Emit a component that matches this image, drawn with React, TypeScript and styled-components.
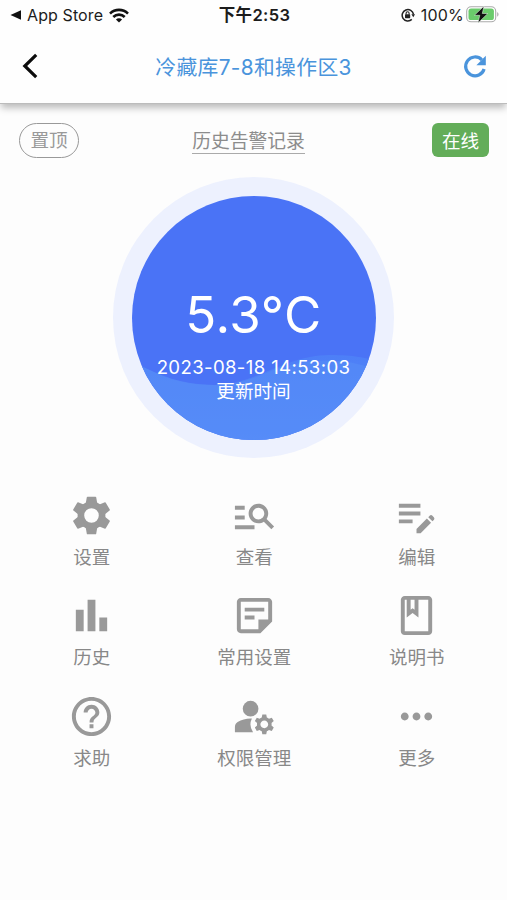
import React from "react";
import styled, { createGlobalStyle } from "styled-components";
import {
  MdManageSearch,
  MdEditNote,
  MdBarChart,
  MdOutlineStickyNote2,
  MdOutlineBook,
  MdHelpOutline,
  MdManageAccounts,
  MdMoreHoriz,
} from "react-icons/md";

const GlobalStyle = createGlobalStyle`
  * { box-sizing: border-box; }
  body {
    margin: 0;
    background: #fdfdfd;
    font-family: Inter, "Noto Sans CJK SC", sans-serif;
  }
  svg { display: block; flex: none; }
`;

const Screen = styled.div`
  width: 507px;
  height: 900px;
  display: flex;
  flex-direction: column;
  overflow: hidden;
  background: #fdfdfd;
`;

const TopArea = styled.header`
  flex: none;
  height: 104px;
  background: #fefefe;
  border-bottom: 1px solid #bcbcbc;
  box-shadow: 0 5px 7px -1px rgba(0, 0, 0, 0.26);
`;

const StatusBar = styled.div`
  height: 30px;
  display: grid;
  grid-template-columns: 1fr auto 1fr;
  align-items: center;
  padding: 0 8px 0 10px;
  color: #1c1c1c;
  font-size: 16px;
  line-height: 30px;
`;

const StatusSide = styled.div<{ $end?: boolean }>`
  display: flex;
  align-items: center;
  justify-content: ${(p) => (p.$end ? "flex-end" : "flex-start")};
  gap: 6px;
`;

const StoreName = styled.span`
  letter-spacing: 0.1px;
`;

const Percent = styled.span`
  margin-right: -4px;
  letter-spacing: 0.2px;
`;

const Clock = styled.span`
  font-size: 16.5px;
  font-weight: 600;
  letter-spacing: 0.35px;
`;

const NavBar = styled.div`
  height: 73px;
  display: grid;
  grid-template-columns: 60px 1fr 60px;
  align-items: center;
  padding: 0 20px 0 18px;
`;

const NavButton = styled.button<{ $end?: boolean }>`
  display: flex;
  justify-content: ${(p) => (p.$end ? "flex-end" : "flex-start")};
  padding: 0;
  border: 0;
  background: none;
  color: #4a94dc;
`;

const Title = styled.h1`
  margin: 2px 0 0 2px;
  color: #4a94dc;
  font-size: 20.8px;
  font-weight: 400;
  line-height: 30px;
  letter-spacing: 0.35px;
  text-align: center;
  white-space: nowrap;
`;

const InfoRow = styled.div`
  flex: none;
  height: 36px;
  margin-top: 18px;
  padding: 0 18px 0 19px;
  display: grid;
  grid-template-columns: 60px auto 57px;
  align-items: center;
  justify-content: space-between;
  font-size: 18.6px;
`;

const PinButton = styled.button`
  width: 60px;
  height: 35px;
  padding: 1px 0 0;
  border: 1.5px solid #999;
  border-radius: 18px;
  background: none;
  color: #999;
  font: inherit;
  line-height: 31px;
`;

const RecordLink = styled.a`
  margin: 1px 14px 0 0;
  height: 27px;
  border-bottom: 1.5px solid #aaa;
  color: #8c8c8c;
  font-size: 18.8px;
  line-height: 29px;
`;

const OnlineTag = styled.span`
  width: 57px;
  height: 34px;
  border-radius: 6px;
  background: #63ad59;
  color: #fff;
  line-height: 36px;
  text-align: center;
`;

const Gauge = styled.section`
  flex: none;
  align-self: center;
  width: 281px;
  height: 281px;
  margin-top: 19px;
  display: grid;
  place-items: center;
  border-radius: 50%;
  background: #edf1fe;
`;

const Dial = styled.div`
  position: relative;
  width: 244px;
  height: 244px;
  border-radius: 50%;
  overflow: hidden;
  background: #4a73f6;
`;

const Wave = styled.svg`
  position: absolute;
  inset: 0;
`;

const Reading = styled.div`
  position: relative;
  display: flex;
  flex-direction: column;
  align-items: center;
  padding-top: 88px;
  color: #fff;
`;

const Temperature = styled.div`
  font-size: 51px;
  line-height: 62px;
  letter-spacing: 0.6px;
`;

const Caption = styled.div`
  font-size: 18.6px;
  line-height: 24px;
  white-space: nowrap;
`;

const Timestamp = styled(Caption)`
  margin-top: 9px;
  letter-spacing: 0.36px;
`;

const Menu = styled.nav`
  flex: none;
  margin-top: 34px;
  padding-left: 10.5px;
  display: grid;
  grid-template-columns: repeat(3, 162.5px);
  grid-auto-rows: 100.4px;
`;

const MenuItem = styled.button`
  display: flex;
  flex-direction: column;
  align-items: center;
  padding: 0;
  border: 0;
  background: none;
  color: #999;
  font: inherit;
`;

const MenuLabel = styled.span`
  margin-top: 4px;
  color: #888;
  font-size: 18.5px;
  line-height: 28px;
`;

const Gear = ({ size }: { size: number }) => (
  <svg width={size} height={size} viewBox="-23.5 -23.5 47 47" fill="currentColor">
    <circle r="10.6" fill="none" stroke="currentColor" strokeWidth="6.6" />
    {[0, 60, 120, 180, 240, 300].map((angle) => (
      <path
        key={angle}
        d="M-4 -18.8H4Q4.6 -18.8 4.7 -18.2L5.6 -13 7 -10H-7L-5.6 -13 -4.7 -18.2Q-4.6 -18.8 -4 -18.8z"
        transform={`rotate(${angle})`}
      />
    ))}
  </svg>
);

const items = [
  { label: "设置", Icon: Gear },
  { label: "查看", Icon: MdManageSearch },
  { label: "编辑", Icon: MdEditNote },
  { label: "历史", Icon: MdBarChart },
  { label: "常用设置", Icon: MdOutlineStickyNote2 },
  { label: "说明书", Icon: MdOutlineBook },
  { label: "求助", Icon: MdHelpOutline },
  { label: "权限管理", Icon: MdManageAccounts },
  { label: "更多", Icon: MdMoreHoriz },
];

const BackToApp = () => (
  <svg width="11" height="10" viewBox="0 0 11 10">
    <path d="M.5 5 11 .2v9.6z" fill="#111" />
  </svg>
);

const Wifi = () => (
  <svg width="20" height="15" viewBox="0 0 20 15" fill="none" stroke="#111" strokeWidth="2.6">
    <path d="M1 5.6a12.8 12.8 0 0 1 18 0" />
    <path d="M4.3 9a8.1 8.1 0 0 1 11.4 0" />
    <path d="M10 14.6 6.9 11.5a4.4 4.4 0 0 1 6.2 0z" fill="#111" stroke="none" />
  </svg>
);

const RotationLock = () => (
  <svg width="14" height="14" viewBox="0 0 14 14" fill="none" stroke="#222" strokeWidth="1.5">
    <path d="M10.8 11.4a5.7 5.7 0 1 1 1.7-5" />
    <path d="M10.4 6.3h3.6l-1.7 3z" fill="#222" stroke="none" />
    <rect x="4" y="6.3" width="5.2" height="3.9" rx=".6" fill="#222" stroke="none" />
    <path d="M5.1 6.6V5.3a1.5 1.5 0 0 1 3 0v1.3" strokeWidth="1.1" />
  </svg>
);

const Battery = () => (
  <svg width="33" height="18" viewBox="0 0 33 18">
    <rect x=".7" y=".8" width="29" height="15" rx="4.4" fill="#fff" stroke="#aaa" strokeWidth="1.1" />
    <rect x="2.5" y="2.6" width="25.4" height="11.4" rx="2.6" fill="#6acb6b" />
    <path d="M31.2 6.1v4.6c1.8-.8 1.8-3.8 0-4.6z" fill="#aaa" />
    <path
      d="M17.9.2 8.4 9.3h5.4L12 17l9.8-9.5h-5.5z"
      fill="#111"
      stroke="#eefaee"
      strokeWidth=".5"
    />
  </svg>
);

const BackArrow = () => (
  <svg width="24" height="30" viewBox="0 0 24 30">
    <path d="M18.2 2.8 6.8 14l11.4 11.2" fill="none" stroke="#0b0b0b" strokeWidth="3.2" />
  </svg>
);

const Refresh = () => (
  <svg width="24" height="24" viewBox="0 0 24 24">
    <path
      d="M21.1 14A9.4 9.4 0 1 1 18.8 4.8"
      fill="none"
      stroke="currentColor"
      strokeWidth="3.2"
    />
    <path d="M22.8.8v9.4h-9.4z" fill="currentColor" />
  </svg>
);

export default function App() {
  return (
    <>
      <GlobalStyle />
      <Screen>
        <TopArea>
          <StatusBar>
            <StatusSide>
              <BackToApp />
              <StoreName>App Store</StoreName>
              <Wifi />
            </StatusSide>
            <Clock>下午2:53</Clock>
            <StatusSide $end>
              <RotationLock />
              <Percent>100%</Percent>
              <Battery />
            </StatusSide>
          </StatusBar>
          <NavBar>
            <NavButton aria-label="返回">
              <BackArrow />
            </NavButton>
            <Title>冷藏库7-8和操作区3</Title>
            <NavButton $end aria-label="刷新">
              <Refresh />
            </NavButton>
          </NavBar>
        </TopArea>
        <InfoRow>
          <PinButton>置顶</PinButton>
          <RecordLink>历史告警记录</RecordLink>
          <OnlineTag>在线</OnlineTag>
        </InfoRow>
        <Gauge>
          <Dial>
            <Wave width="244" height="244" viewBox="0 0 244 244">
              <defs>
                <linearGradient id="water" x1="0" y1="0" x2="0" y2="1">
                  <stop offset="0" stopColor="#4d7ff7" />
                  <stop offset="1" stopColor="#568cf8" />
                </linearGradient>
              </defs>
              <path
                d="M0 165C24 177 42 189 82 189 126 188 153 159 198 159 222 159 234 162 244 165V244H0z"
                fill="url(#water)"
              />
              <path
                d="M0 166C30 180 47 188 82 189 106 189 119 183 134 177 170 162 211 160 244 174V244H0z"
                fill="#568cf8"
                fillOpacity=".65"
              />
            </Wave>
            <Reading>
              <Temperature>5.3°C</Temperature>
              <Timestamp>2023-08-18 14:53:03</Timestamp>
              <Caption>更新时间</Caption>
            </Reading>
          </Dial>
        </Gauge>
        <Menu>
          {items.map(({ label, Icon }) => (
            <MenuItem key={label}>
              <Icon size={47} />
              <MenuLabel>{label}</MenuLabel>
            </MenuItem>
          ))}
        </Menu>
      </Screen>
    </>
  );
}
